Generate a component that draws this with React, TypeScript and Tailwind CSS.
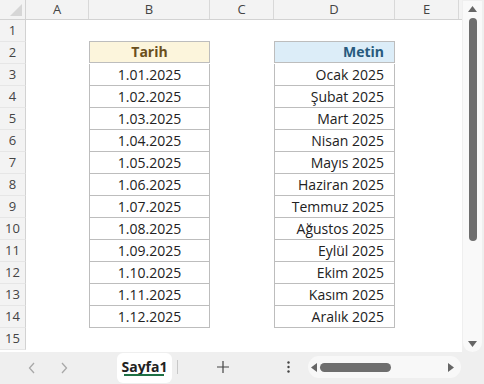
import React from "react";

const months = ["Ocak 2025","Şubat 2025","Mart 2025","Nisan 2025","Mayıs 2025","Haziran 2025","Temmuz 2025","Ağustos 2025","Eylül 2025","Ekim 2025","Kasım 2025","Aralık 2025"];
const dates = ["1.01.2025","1.02.2025","1.03.2025","1.04.2025","1.05.2025","1.06.2025","1.07.2025","1.08.2025","1.09.2025","1.10.2025","1.11.2025","1.12.2025"];
const font = { fontFamily: '"Open Sans", "Noto Sans", sans-serif' };

export default function App() {
  const rows = Array.from({ length: 15 }, (_, i) => i + 1);
  return (
    <div className="w-[484px] h-[384px] bg-[#efefef] flex flex-col overflow-hidden" style={font}>
      <div className="flex h-[352px]">
        <div className="w-[462px] h-[352px] bg-white flex flex-col overflow-hidden">
          <div className="flex h-[20px] bg-[#f3f3f3] border-b border-[#d2d2d2] text-[13px] text-[#444]">
            <div className="w-[26px] h-full border-r border-[#d2d2d2] relative">
              <svg className="absolute right-[3px] bottom-[3px]" width="12" height="12" viewBox="0 0 12 12"><polygon points="12,0 12,12 0,12" fill="#d6d6d6" /></svg>
            </div>
            {[["A",63],["B",121],["C",64],["D",121],["E",64]].map(([l,w]) => (
              <div key={l as string} style={{ width: w as number }} className="h-full border-r border-[#d8d8d8] flex items-center justify-center leading-none">{l}</div>
            ))}
          </div>
          {rows.map((r) => {
            const di = r - 3;
            const isHead = r === 2;
            const inTable = r >= 2 && r <= 14;
            return (
              <div key={r} className="flex h-[22px] shrink-0">
                <div className="w-[26px] h-full bg-[#f3f3f3] border-r border-[#d2d2d2] border-b border-b-[#e6e6e6] flex items-center justify-center text-[13px] text-[#444]">{r}</div>
                <div className="w-[63px]" />
                <div className={"w-[121px] h-full text-[14px] flex items-center justify-center leading-none " + (inTable ? "border-l border-r border-b border-[#bdbdbd] " : "") + (isHead ? "border-t bg-[#fcf5dc] font-bold text-[#6a4f1c] -mt-px h-[23px]" : "text-[#222]")}>
                  {isHead ? "Tarih" : inTable ? dates[di] : ""}
                </div>
                <div className="w-[64px]" />
                <div className={"w-[121px] h-full text-[14px] flex items-center justify-end pr-[10px] leading-none " + (inTable ? "border-l border-r border-b border-[#bdbdbd] " : "") + (isHead ? "border-t bg-[#dcedf8] font-bold text-[#275a7d] -mt-px h-[23px]" : "text-[#222]")}>
                  {isHead ? "Metin" : inTable ? months[di] : ""}
                </div>
                <div className="w-[67px]" />
              </div>
            );
          })}
        </div>
        <div className="w-[22px] h-full pl-[1px] pr-[2px] pt-[1px]">
          <div className="h-full bg-[#f9f9f9] rounded-b-[10px] flex flex-col items-center pt-[5px] pb-[5px]">
            <svg width="9" height="6" viewBox="0 0 9 6"><polygon points="4.5,0 9,6 0,6" fill="#666" /></svg>
            <div className="w-[8px] h-[223px] bg-[#6e6e6e] rounded-full mt-[6px]" />
            <div className="flex-1" />
            <svg width="9" height="6" viewBox="0 0 9 6"><polygon points="0,0 9,0 4.5,6" fill="#666" /></svg>
          </div>
        </div>
      </div>
      <div className="flex-1 flex items-stretch relative">
        <div className="w-[117px] flex items-center text-[#aaa]">
          <svg className="ml-[28px]" width="8" height="12" viewBox="0 0 8 12"><polyline points="6,1 1.5,6 6,11" fill="none" stroke="#a8a8a8" strokeWidth="1.3" /></svg>
          <svg className="ml-[24px]" width="8" height="12" viewBox="0 0 8 12"><polyline points="2,1 6.5,6 2,11" fill="none" stroke="#a8a8a8" strokeWidth="1.3" /></svg>
        </div>
        <div className="w-[55px] mt-[1px] mb-[1px] bg-white rounded-[6px] relative flex items-start justify-center pt-[3px] text-[14px] font-bold text-[#222]">
          Sayfa1
          <div className="absolute left-[7px] right-[8px] top-[21px] h-[2px] bg-[#1d7044]" />
        </div>
        <div className="w-px h-[14px] bg-[#c8c8c8] mt-[8px] ml-[5px]" />
        <div className="w-[90px] flex items-center justify-center pb-[2px]">
          <svg width="12" height="12" viewBox="0 0 12 12"><path d="M6 0v12M0 6h12" stroke="#444" strokeWidth="1.2" /></svg>
        </div>
        <div className="w-[40px] flex items-center justify-center pb-[2px]">
          <svg width="3" height="12" viewBox="0 0 3 12"><circle cx="1.5" cy="1.5" r="1.2" fill="#444" /><circle cx="1.5" cy="6" r="1.2" fill="#444" /><circle cx="1.5" cy="10.5" r="1.2" fill="#444" /></svg>
        </div>
        <div className="w-[153px] h-[22px] mt-[4px] bg-[#f8f8f8] rounded-full flex items-center px-[3px]">
          <svg width="6" height="9" viewBox="0 0 6 9"><polygon points="0,4.5 6,0 6,9" fill="#666" /></svg>
          <div className="w-[71px] h-[9px] bg-[#6e6e6e] rounded-full ml-[3px]" />
          <div className="flex-1" />
          <svg width="6" height="9" viewBox="0 0 6 9" className="mr-[4px]"><polygon points="6,4.5 0,0 0,9" fill="#666" /></svg>
        </div>
      </div>
    </div>
  );
}
